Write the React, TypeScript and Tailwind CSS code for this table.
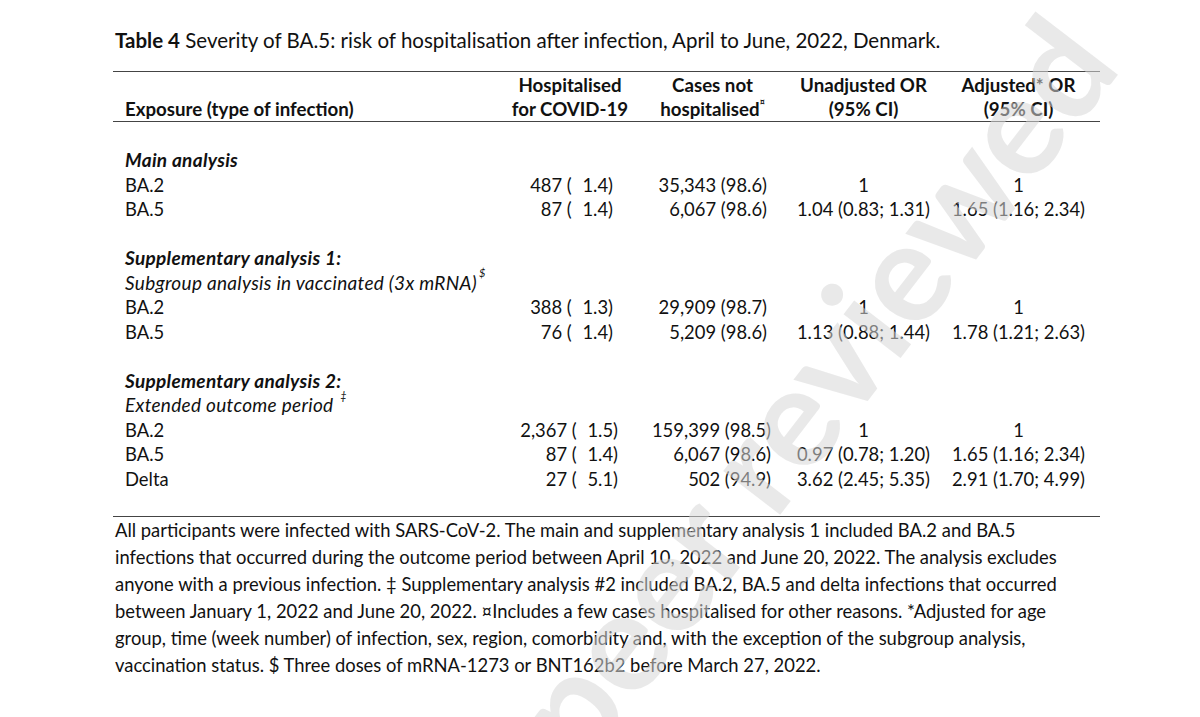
import React from 'react';

type Row = [string, string, string, string, string];

interface Section {
  title: string;
  sub?: string;
  mark?: string;
  shift?: boolean;
  rows: Row[];
}

const sections: Section[] = [
  {
    title: 'Main analysis',
    rows: [
      ['BA.2', '487 (\u20071.4)', '35,343 (98.6)', '1', '1'],
      ['BA.5', '87 (\u20071.4)', '6,067 (98.6)', '1.04 (0.83; 1.31)', '1.65 (1.16; 2.34)'],
    ],
  },
  {
    title: 'Supplementary analysis 1:',
    sub: 'Subgroup analysis in vaccinated (3x mRNA)',
    mark: '$',
    rows: [
      ['BA.2', '388 (\u20071.3)', '29,909 (98.7)', '1', '1'],
      ['BA.5', '76 (\u20071.4)', '5,209 (98.6)', '1.13 (0.88; 1.44)', '1.78 (1.21; 2.63)'],
    ],
  },
  {
    title: 'Supplementary analysis 2:',
    sub: 'Extended outcome period ',
    mark: '‡',
    shift: true,
    rows: [
      ['BA.2', '2,367 (\u20071.5)', '159,399 (98.5)', '1', '1'],
      ['BA.5', '87 (\u20071.4)', '6,067 (98.6)', '0.97 (0.78; 1.20)', '1.65 (1.16; 2.34)'],
      ['Delta', '27 (\u20075.1)', '502 (94.9)', '3.62 (2.45; 5.35)', '2.91 (1.70; 4.99)'],
    ],
  },
];

const footnote = [
  'All participants were infected with SARS-CoV-2. The main and supplementary analysis 1 included BA.2 and BA.5',
  'infections that occurred during the outcome period between April 10, 2022 and June 20, 2022. The analysis excludes',
  'anyone with a previous infection. ‡ Supplementary analysis #2 included BA.2, BA.5 and delta infections that occurred',
  'between January 1, 2022 and June 20, 2022. ¤Includes a few cases hospitalised for other reasons. *Adjusted for age',
  'group, time (week number) of infection, sex, region, comorbidity and, with the exception of the subgroup analysis,',
  'vaccination status. $ Three doses of mRNA-1273 or BNT162b2 before March 27, 2022.',
];

const cols = 'grid grid-cols-[392px_130px_155px_147px_163px]';

export default function App() {
  return (
    <div className="relative w-[1200px] h-[717px] overflow-hidden bg-white text-[#111] font-['Lato','Open_Sans',sans-serif] text-[18.4px]">
      {/* Title */}
      <div className="pl-[115px] pt-[28px] text-[20.5px] leading-[24px] whitespace-nowrap">
        <span className="font-bold">Table 4</span> Severity of BA.5: risk of hospitalisation after infection, April to June, 2022, Denmark.
      </div>

      {/* Table */}
      <div className="ml-[113px] w-[987px] mt-[19px]">
        <div className={`${cols} border-t border-b border-[#444] pt-[1px] font-bold text-[18.7px] leading-[24px] whitespace-nowrap`}>
          <div className="pl-[12px] flex items-end">Exposure (type of infection)</div>
          <div className="text-center">
            <div>Hospitalised</div>
            <div>for COVID-19</div>
          </div>
          <div className="text-center">
            <div>Cases not</div>
            <div>
              hospitalised<sup className="text-[9px] align-[7px]">¤</sup>
            </div>
          </div>
          <div className="text-center">
            <div>Unadjusted OR</div>
            <div>(95% CI)</div>
          </div>
          <div className="text-center">
            <div>Adjusted* OR</div>
            <div>(95% CI)</div>
          </div>
        </div>

        <div className="pt-[26px] pb-[25px] leading-[24.5px] border-b border-[#444]">
          {sections.map((sec, i) => (
            <div key={sec.title} className={i > 0 ? 'mt-[24.5px]' : ''}>
              <div className="pl-[12px] font-bold italic text-[19px] tracking-[0.3px]">{sec.title}</div>
              {sec.sub && (
                <div className="pl-[12px] italic text-[19px] tracking-[0.3px] whitespace-pre">
                  {sec.sub}
                  <sup className="text-[11px] align-[7px] ml-[2px]">{sec.mark}</sup>
                </div>
              )}
              {sec.rows.map((r) => (
                <div key={r[0] + r[1]} className={`${cols} whitespace-pre`}>
                  <div className="pl-[12px]">{r[0]}</div>
                  <div className={`text-right ${sec.shift ? 'pr-[17px]' : 'pr-[22px]'}`}>{r[1]}</div>
                  <div className={`text-right ${sec.shift ? 'pr-[19px]' : 'pr-[23px]'}`}>{r[2]}</div>
                  <div className="text-center">{r[3]}</div>
                  <div className="text-center">{r[4]}</div>
                </div>
              ))}
            </div>
          ))}
        </div>

        {/* Footnote */}
        <div className="pl-[2px] leading-[27px] whitespace-nowrap">
          {footnote.map((l) => (
            <div key={l}>{l}</div>
          ))}
        </div>
      </div>

      {/* Watermark */}
      <div className="pointer-events-none absolute left-[1123px] top-[68px] w-0 h-0 origin-top-left -rotate-[52.5deg]">
        <span className="absolute right-0 top-[-124px] whitespace-nowrap text-[140px] leading-none font-bold text-[#d7d7d7]/55">
          not peer reviewed
        </span>
      </div>
    </div>
  );
}
